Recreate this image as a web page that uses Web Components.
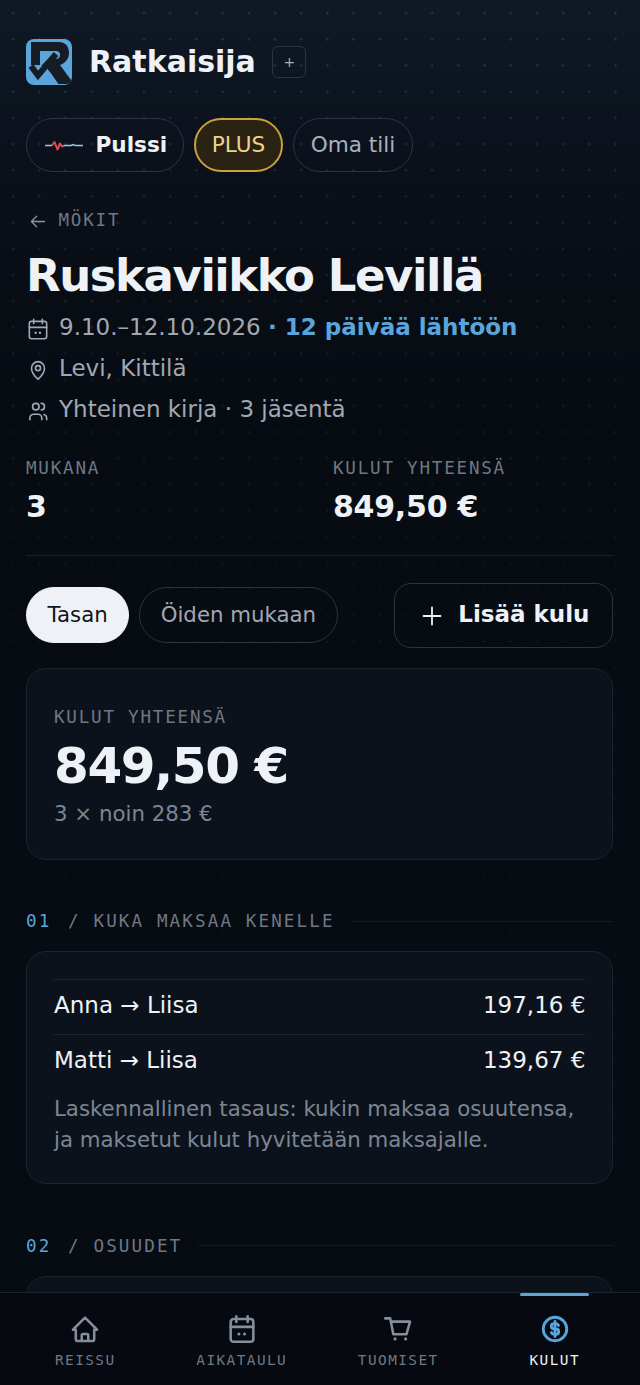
<!DOCTYPE html>
<html lang="fi">
<head>
<meta charset="utf-8">
<title>Ruskaviikko Levillä</title>
<style>
  html, body { margin: 0; height: 100%; background: #070b12; }
  body { overflow: hidden; font-family: "DejaVu Sans", sans-serif; color: #eef2f7; }
</style>
</head>
<body>
<trip-page>
  <trip-header></trip-header>
  <trip-hero></trip-hero>
  <expense-controls></expense-controls>
  <total-card></total-card>
  <section-title num="01" label="KUKA MAKSAA KENELLE"></section-title>
  <info-card>
    <settle-row who="Anna → Liisa" sum="197,16 €"></settle-row>
    <settle-row who="Matti → Liisa" sum="139,67 €"></settle-row>
    <p style="margin:4px 0 0;font-size:21.300px;line-height:31px;color:#7c8693">Laskennallinen tasaus: kukin maksaa osuutensa, ja maksetut kulut hyvitetään maksajalle.</p>
  </info-card>
  <section-title num="02" label="OSUUDET" style="margin-top:49.500px"></section-title>
  <info-card style="height:200px"></info-card>
</trip-page>
<bottom-nav></bottom-nav>

<script>
const CAL = `<path d="M4 7a2 2 0 0 1 2-2h12a2 2 0 0 1 2 2v12a2 2 0 0 1-2 2H6a2 2 0 0 1-2-2z"/><path d="M16 3v4M8 3v4M4 10.500h16"/><path d="M9.800 15.500h.01M13.800 15.500h.01" stroke-width="2.200"/>`;

function define(name, css, html) {
  customElements.define(name, class extends HTMLElement {
    connectedCallback() {
      if (this.shadowRoot) return;
      this.attachShadow({ mode: "open" });
      this.shadowRoot.innerHTML = `<style>${css}</style>${typeof html === "function" ? html(this) : html}`;
    }
  });
}

define("trip-page", `
  :host {
    display: block; height: 1385px; overflow: hidden; box-sizing: border-box; padding: 39px 26.670px 0 26px;
    background:
      linear-gradient(180deg, transparent 0, rgba(7,11,18,.7) 620px, rgba(7,11,18,.9) 100%),
      radial-gradient(circle at 13.100px 13.100px, rgba(170,190,210,.17) .9px, transparent 1.500px) 0 0 / 26.200px 26.200px,
      linear-gradient(180deg, #0f1a26 0, #0b111b 190px, #070b12 420px, #070b12 100%);
  }
`, `<slot></slot>`);

define("trip-header", `
  :host { display: block; }
  .brand { display: flex; align-items: center; height: 46px; }
  svg.logo { width: 46px; height: 46px; flex: none; }
  h1 { margin: 0 0 0 17px; font-size: 30px; font-weight: 700; color: #eef2f7; line-height: 46px; }
  .add { width: 34px; height: 32px; margin-left: 16.500px; box-sizing: border-box; border: 1.500px solid #2d343f; border-radius: 6px;
         display: flex; align-items: center; justify-content: center; color: #a9b1bc; font-size: 14px; }
  nav { display: flex; gap: 9.500px; margin-top: 33px; }
  .pill { height: 54px; box-sizing: border-box; border: 1.500px solid #2d343f; border-radius: 27px; display: flex; align-items: center;
          font-size: 21.600px; padding: 0 17px 2px; color: #a9b1bc; }
  .pulse { padding: 0 16px 2px 17.500px; gap: 13px; color: #eef2f7; font-weight: 700; }
  .plus { border: 2px solid #c9a23a; background: #2a2213; color: #ecd48a; padding: 0 16px 2px; }
  .pulse svg { width: 38px; height: 15px; margin-top: 3px; }
`, `
  <div class="brand">
    <svg class="logo" viewBox="0 0 46 46">
      <rect width="46" height="46" rx="8" fill="#5aa6dc"/>
      <path d="M5 3H33C40 3 43 8 43 14C43 20 39 24 34 26L45 41Q44 45 40 45H32L21 29L14 26H5Z" fill="#161c24"/>
      <path d="M14 12H30C33 12 34 14 34 16C34 19 32 20 29 20H22L14 28Z" fill="#5aa6dc"/>
      <path d="M5 27L12 36.500L30 15" fill="none" stroke="#161c24" stroke-width="6"/>
      <path d="M0 26H5" stroke="#5aa6dc" stroke-width="1.500"/>
      <path d="M14 46L24 33L33 46Z" fill="#5aa6dc"/>
    </svg>
    <h1>Ratkaisija</h1>
    <div class="add">+</div>
  </div>
  <nav>
    <div class="pill pulse">
      <svg viewBox="0 0 38 15" fill="none" stroke-linejoin="round">
        <path d="M0 7.500H7M19 7.500H26L28.500 6.500L30 7.500H38" stroke="#9cc8e6" stroke-width="1.500"/>
        <path d="M7 7.500L9.500 4L12.500 11.500L15 5.500L17 8.500L19 7.500" stroke="#e5484d" stroke-width="2"/>
      </svg>
      Pulssi
    </div>
    <div class="pill plus">PLUS</div>
    <div class="pill">Oma tili</div>
  </nav>
`);

define("trip-hero", `
  :host { display: block; margin-top: 36px; }
  .back { display: flex; align-items: center; gap: 11px; height: 24px; font: 17.600px "DejaVu Sans Mono", monospace; letter-spacing: 1.760px; color: #6f7884; }
  .back svg { width: 21px; height: 21px; margin-top: 2px; margin-left: .5px; stroke: #8a94a1; }
  h2 { margin: 14px 0 0; font-size: 45px; line-height: 60px; font-weight: 700; letter-spacing: -1.450px; color: #eef2f7; }
  .meta { display: flex; flex-direction: column; }
  .row { display: flex; align-items: center; height: 41px; gap: 8px; font-size: 23px; color: #a0a8b3; }
  .row svg { width: 26px; height: 26px; flex: none; stroke: #a0a8b3; margin: 4px 0 0 -1px; }
  b { color: #5aa6dc; }
  .stats { display: grid; grid-template-columns: 307px 1fr; margin-top: 27px; padding-bottom: 29px; border-bottom: 1px solid #1b222c; }
  .lab { font: 17.600px "DejaVu Sans Mono", monospace; letter-spacing: 1.760px; color: #6f7884; line-height: 24px; }
  .val { font-size: 30px; font-weight: 700; letter-spacing: -.25px; line-height: 38px; margin-top: 8px; color: #eef2f7; }
  svg { fill: none; stroke-width: 1.500; stroke-linecap: round; stroke-linejoin: round; }
`, `
  <div class="back"><svg viewBox="0 0 24 24" stroke-width="1.800"><path d="M20 12H5M11 6l-6 6 6 6"/></svg>MÖKIT</div>
  <h2>Ruskaviikko Levillä</h2>
  <div class="meta">
    <div class="row"><svg viewBox="0 0 24 24">${CAL}</svg><span>9.10.–12.10.2026 <b>· 12 päivää lähtöön</b></span></div>
    <div class="row"><svg viewBox="0 0 24 24"><path d="M12 20.500s-6-5.400-6-10.200a6 6 0 0 1 12 0c0 4.800-6 10.200-6 10.200z"/><circle cx="12" cy="10.300" r="2.300"/></svg><span>Levi, Kittilä</span></div>
    <div class="row"><svg viewBox="0 0 24 24"><circle cx="10" cy="8" r="3"/><path d="M4.500 20v-1.500a3.500 3.500 0 0 1 3.500-3.500h4a3.500 3.500 0 0 1 3.500 3.500V20M15 5a3 3 0 0 1 0 6M20 20v-1.500a3.500 3.500 0 0 0-2.500-3.300"/></svg><span>Yhteinen kirja · 3 jäsentä</span></div>
  </div>
  <div class="stats">
    <div><div class="lab">MUKANA</div><div class="val">3</div></div>
    <div><div class="lab">KULUT YHTEENSÄ</div><div class="val">849,50 €</div></div>
  </div>
`);

define("expense-controls", `
  :host { display: flex; align-items: center; margin-top: 27px; height: 65px; font-size: 21.300px; }
  .tab { height: 56px; margin-top: -1px; box-sizing: border-box; border-radius: 28px; border: 1.500px solid #2d343f; display: flex; align-items: center; padding: 0 20.500px 2px; color: #a0a8b3; margin-right: 10px; }
  .on { background: #eef1f6; border-color: #eef1f6; color: #10151c; }
  .add { margin-left: auto; width: 219px; height: 65px; box-sizing: border-box; border: 1.500px solid #2d343f; border-radius: 17px; display: flex; align-items: center; justify-content: center; gap: 15px; padding: 0 0 3px 3px; font-size: 23px; font-weight: 700; color: #eef2f7; }
  .add svg { width: 22px; height: 22px; stroke: #eef2f7; stroke-width: 1.800; fill: none; stroke-linecap: round; margin-top: 4px; }
`, `
  <div class="tab on">Tasan</div>
  <div class="tab">Öiden mukaan</div>
  <div class="add"><svg viewBox="0 0 22 22"><path d="M11 2.500v17M2.500 11h17"/></svg>Lisää kulu</div>
`);

define("total-card", `
  :host { display: block; margin-top: 20px; height: 192px; box-sizing: border-box; padding: 36px 27px 0; border: 1.500px solid #1e242e; border-radius: 20px; background: #0c121b; }
  .lab { font: 17.600px "DejaVu Sans Mono", monospace; letter-spacing: 1.760px; color: #6f7884; line-height: 24px; }
  .big { font-size: 50px; font-weight: 700; letter-spacing: -1.400px; line-height: 62px; margin-top: 6px; color: #eef2f7; }
  .sub { font-size: 21.300px; line-height: 30px; color: #7c8693; margin-top: 2px; }
`, `
  <div class="lab">KULUT YHTEENSÄ</div>
  <div class="big">849,50 €</div>
  <div class="sub">3 × noin 283 €</div>
`);

define("section-title", `
  :host { display: flex; align-items: center; margin-top: 49px; height: 24px; font: 17.600px "DejaVu Sans Mono", monospace; letter-spacing: 2.100px; color: #6f7884; white-space: pre; }
  .n { color: #5aa6dc; margin-right: 4px; }
  i { flex: 1; height: 1px; background: #141a22; margin-left: 16px; }
`, (el) => `<span class="n">${el.getAttribute("num")}</span><span> / ${el.getAttribute("label")}</span><i></i>`);

define("info-card", `
  :host { display: block; margin-top: 18px; box-sizing: border-box; padding: 27px 27px 28px; border: 1.500px solid #1e242e; border-radius: 20px; background: #0c121b; }
`, `<slot></slot>`);

define("settle-row", `
  :host { display: flex; justify-content: space-between; align-items: center; box-sizing: border-box; height: 55px; padding-bottom: 5px; border-top: 1px solid #1e2530; font-size: 23px; color: #eef2f7; }
`, (el) => `<span>${el.getAttribute("who")}</span><span>${el.getAttribute("sum")}</span>`);

define("bottom-nav", `
  :host { position: fixed; left: 0; right: 0; bottom: 0; height: 93px; box-sizing: border-box; padding: 0 7px; border-top: 1px solid #1c232d; background: #060a10; display: grid; grid-template-columns: repeat(4, 1fr); }
  .item { position: relative; display: flex; flex-direction: column; align-items: center; padding-top: 19px; font: 14.400px "DejaVu Sans Mono", monospace; letter-spacing: 1.440px; color: #6f7884; }
  svg { width: 34px; height: 34px; fill: none; stroke: #858e9a; stroke-width: 1.800; stroke-linecap: round; stroke-linejoin: round; margin-bottom: 6px; }
  .on { color: #eef2f7; }
  .on svg { stroke: #5aa6dc; stroke-width: 2; }
  .on::before { content: ""; position: absolute; top: 0; left: 43px; width: 69px; height: 3px; border-radius: 2px; background: #5aa6dc; }
`, `
  <div class="item"><svg viewBox="0 0 24 24"><path d="M5.500 12.500H3.500L12 4l8.500 8.500H18.500"/><path d="M5.500 12.500V19a1.500 1.500 0 0 0 1.500 1.500h10a1.500 1.500 0 0 0 1.500-1.500v-6.500"/><path d="M9.700 20.500v-4a1 1 0 0 1 1-1h2.600a1 1 0 0 1 1 1v4"/></svg>REISSU</div>
  <div class="item"><svg viewBox="0 0 24 24">${CAL}</svg>AIKATAULU</div>
  <div class="item"><svg viewBox="0 0 24 24"><path d="M3 4.500h3.500L8.700 15.700H18L20.500 6.800H7"/><path d="M9.900 19h.01M17.400 19h.01" stroke-width="2.200"/></svg>TUOMISET</div>
  <div class="item on"><svg viewBox="0 0 24 24"><circle cx="12" cy="12" r="8.300"/><path d="M14.500 9.500a2 2 0 0 0-2-1.300h-1.200a1.900 1.900 0 0 0 0 3.800h1.400a1.900 1.900 0 0 1 0 3.800h-1.200a2 2 0 0 1-2-1.300M12 6.700v10.600"/></svg>KULUT</div>
`);
</script>
</body>
</html>
